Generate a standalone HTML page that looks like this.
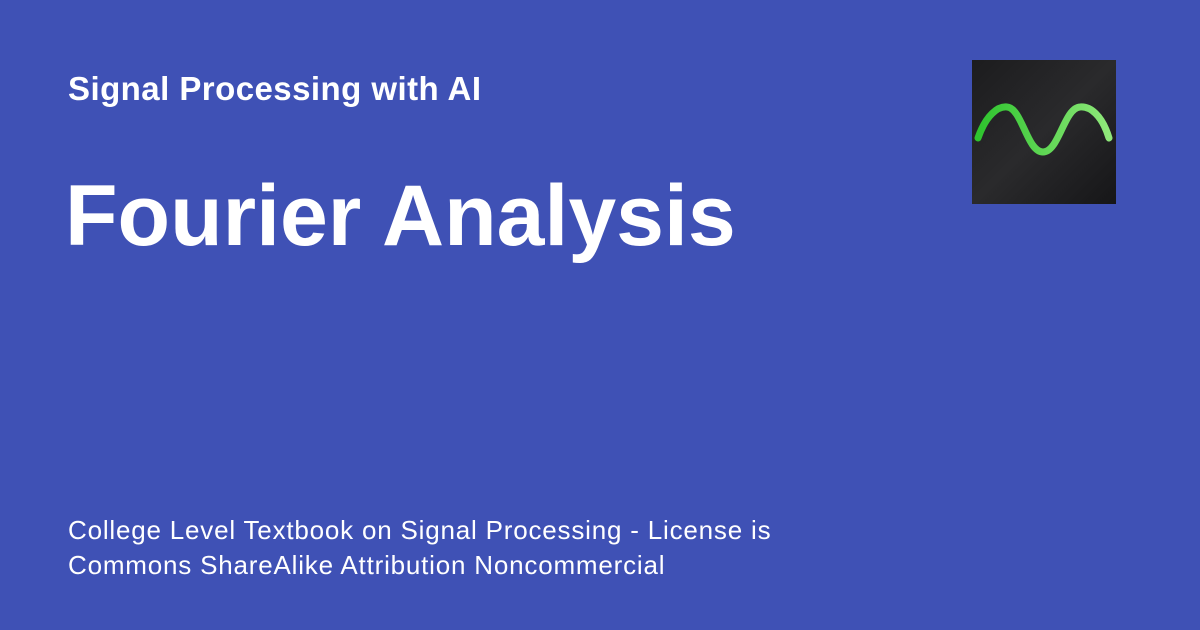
<!DOCTYPE html>
<html><head><style>
body{margin:0;width:1200px;height:630px;background:#3f51b5;font-family:"Liberation Sans",sans-serif;color:#fff;position:relative;overflow:hidden}
.s{position:absolute;left:68px;top:70px;font-size:33px;font-weight:bold;letter-spacing:0.45px}
.t{position:absolute;left:65px;top:167px;font-size:86px;font-weight:bold;letter-spacing:0}
.f{position:absolute;left:68px;top:513px;font-size:26px;line-height:35px;letter-spacing:0.8px}
.logo{position:absolute;left:972px;top:60px;width:144px;height:144px;background:linear-gradient(135deg,#1c1c1e,#2a2a2c 50%,#161618)}
</style></head><body>
<div class="s">Signal Processing with AI</div>
<div class="t">Fourier Analysis</div>
<div class="f">College Level Textbook on Signal Processing - License is<br>Commons ShareAlike Attribution Noncommercial</div>
<div class="logo"><svg width="144" height="144" viewBox="0 0 144 144"><defs><linearGradient id="g" x1="0" x2="1"><stop offset="0" stop-color="#2ec42e"/><stop offset="1" stop-color="#8fe87a"/></linearGradient></defs>
<path d="M6 78 C14 55 26 46 35 47 C50 48 55 92 71 92 C87 92 92 48 108 47 C118 46 130 55 137 78" fill="none" stroke="url(#g)" stroke-width="7" stroke-linecap="round"/></svg></div>
</body></html>
